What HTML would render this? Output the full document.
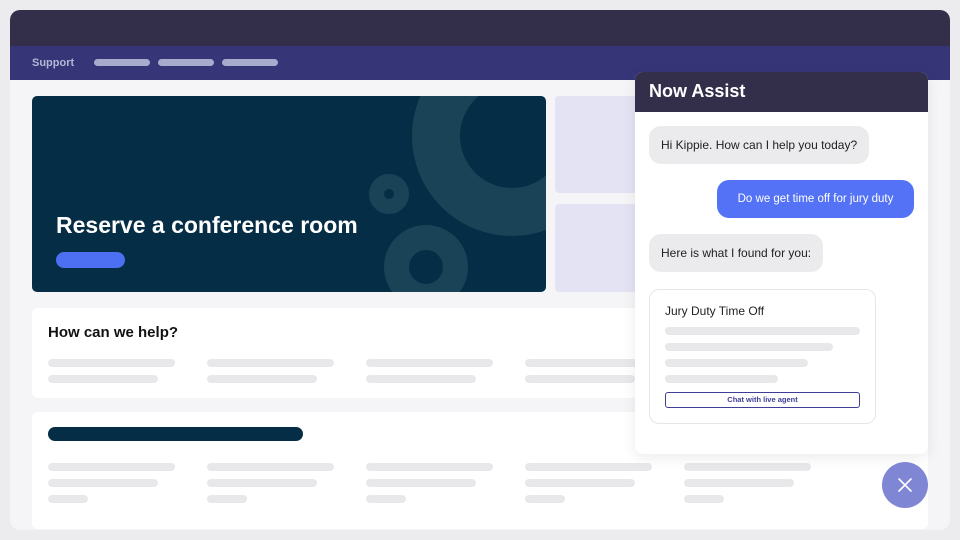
<!DOCTYPE html>
<html><head><style>
*{margin:0;padding:0;box-sizing:border-box}
body{width:960px;height:540px;background:#ececef;font-family:"Liberation Sans",sans-serif;position:relative;overflow:hidden}
.a{position:absolute}
.sk{position:absolute;height:8px;border-radius:4px;background:#e8e8ea}
</style></head><body>
<div class="a" style="left:10px;top:10px;width:940px;height:520px;border-radius:10px;overflow:hidden;background:#f5f5f7">
  <div class="a" style="left:0;top:0;width:940px;height:36px;background:#332f4b"></div>
  <div class="a" style="left:0;top:36px;width:940px;height:34px;background:#363578"></div>
  <div class="a" style="left:22px;top:47px;font-size:11px;font-weight:bold;color:#b5b6d4">Support</div>
  <div class="a" style="left:84px;top:49px;width:56px;height:7px;border-radius:4px;background:#a9abcc"></div>
  <div class="a" style="left:148px;top:49px;width:56px;height:7px;border-radius:4px;background:#a9abcc"></div>
  <div class="a" style="left:212px;top:49px;width:56px;height:7px;border-radius:4px;background:#a9abcc"></div>
</div>
<div class="a" style="left:32px;top:96px;width:514px;height:196px;border-radius:5px;background:#052d45;overflow:hidden">
  <div class="a" style="left:380px;top:-60px;width:200px;height:200px;border-radius:50%;border:48px solid #1b4357"></div>
  <div class="a" style="left:337px;top:78px;width:40px;height:40px;border-radius:50%;border:15px solid #1b4357"></div>
  <div class="a" style="left:352px;top:129px;width:84px;height:84px;border-radius:50%;border:25px solid #1b4357"></div>
  <div class="a" style="left:24px;top:116px;font-size:23px;font-weight:bold;color:#fff">Reserve a conference room</div>
  <div class="a" style="left:24px;top:156px;width:69px;height:16px;border-radius:8px;background:#4d6ff2"></div>
</div>
<div class="a" style="left:555px;top:96px;width:100px;height:97px;border-radius:4px;background:#e4e3f3"></div>
<div class="a" style="left:555px;top:204px;width:100px;height:88px;border-radius:4px;background:#e4e3f3"></div>
<div class="a" style="left:32px;top:308px;width:896px;height:90px;border-radius:6px;background:#fff"></div>
<div class="a" style="left:48px;top:324px;font-size:15px;font-weight:bold;color:#111">How can we help?</div>
<div class="sk" style="left:48px;top:359px;width:127px"></div><div class="sk" style="left:48px;top:375px;width:110px"></div>
<div class="sk" style="left:207px;top:359px;width:127px"></div><div class="sk" style="left:207px;top:375px;width:110px"></div>
<div class="sk" style="left:366px;top:359px;width:127px"></div><div class="sk" style="left:366px;top:375px;width:110px"></div>
<div class="sk" style="left:525px;top:359px;width:127px"></div><div class="sk" style="left:525px;top:375px;width:110px"></div>
<div class="a" style="left:32px;top:412px;width:896px;height:117px;border-radius:6px;background:#fff"></div>
<div class="a" style="left:48px;top:427px;width:255px;height:14px;border-radius:7px;background:#052d45"></div>
<div class="sk" style="left:48px;top:463px;width:127px"></div><div class="sk" style="left:48px;top:479px;width:110px"></div><div class="sk" style="left:48px;top:495px;width:40px"></div>
<div class="sk" style="left:207px;top:463px;width:127px"></div><div class="sk" style="left:207px;top:479px;width:110px"></div><div class="sk" style="left:207px;top:495px;width:40px"></div>
<div class="sk" style="left:366px;top:463px;width:127px"></div><div class="sk" style="left:366px;top:479px;width:110px"></div><div class="sk" style="left:366px;top:495px;width:40px"></div>
<div class="sk" style="left:525px;top:463px;width:127px"></div><div class="sk" style="left:525px;top:479px;width:110px"></div><div class="sk" style="left:525px;top:495px;width:40px"></div>
<div class="sk" style="left:684px;top:463px;width:127px"></div><div class="sk" style="left:684px;top:479px;width:110px"></div><div class="sk" style="left:684px;top:495px;width:40px"></div>

<div class="a" style="left:635px;top:72px;width:293px;height:382px;border-radius:8px;background:#fff;overflow:hidden;box-shadow:0 4px 14px rgba(0,0,0,0.08)">
  <div class="a" style="left:0;top:0;width:293px;height:40px;background:#332f4b"></div>
  <div class="a" style="left:14px;top:9px;font-size:18px;font-weight:bold;color:#fff">Now Assist</div>
  <div class="a" style="left:14px;top:54px;height:38px;padding:0 12px;line-height:38px;border-radius:12px;background:#ebebed;font-size:12px;color:#222">Hi Kippie. How can I help you today?</div>
  <div class="a" style="left:82px;top:108px;width:197px;height:38px;line-height:38px;text-align:center;border-radius:12px;background:#5372f5;font-size:11.5px;color:#fff">Do we get time off for jury duty</div>
  <div class="a" style="left:14px;top:162px;height:38px;padding:0 12px;line-height:38px;border-radius:12px;background:#ebebed;font-size:12px;color:#222">Here is what I found for you:</div>
  <div class="a" style="left:14px;top:217px;width:227px;height:135px;border-radius:10px;border:1px solid #e6e6e9">
    <div class="a" style="left:15px;top:14px;font-size:12px;color:#222">Jury Duty Time Off</div>
    <div class="sk" style="left:15px;top:37px;width:195px"></div>
    <div class="sk" style="left:15px;top:53px;width:168px"></div>
    <div class="sk" style="left:15px;top:69px;width:143px"></div>
    <div class="sk" style="left:15px;top:85px;width:113px"></div>
    <div class="a" style="left:15px;top:102px;width:195px;height:16px;border:1px solid #3f3e96;border-radius:3px;text-align:center;font-size:7.5px;font-weight:bold;line-height:14px;color:#3f3e96">Chat with live agent</div>
  </div>
</div>
<div class="a" style="left:882px;top:462px;width:46px;height:46px;border-radius:50%;background:#7f86d4">
  <svg width="46" height="46" viewBox="0 0 46 46"><path d="M17 17L29 29M29 17L17 29" stroke="#fff" stroke-width="1.6" stroke-linecap="round"/></svg>
</div>
</body></html>
